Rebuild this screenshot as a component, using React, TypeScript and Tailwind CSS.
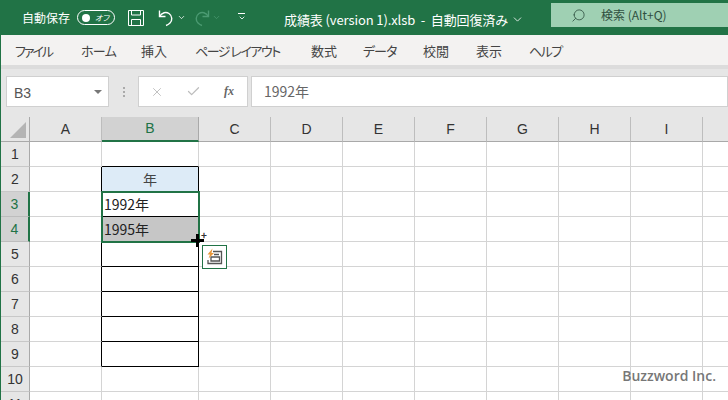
import React from 'react';
import { ChevronDown, Search, X, Check } from 'lucide-react';

const jp = "font-['Noto_Sans_CJK_JP','Noto_Sans',sans-serif] [font-feature-settings:'palt']";
const tabs = [
  ['ファイル', 'w-[66px] tracking-[-2px]'],
  ['ホーム', 'w-[60px] tracking-[-0.7px]'],
  ['挿入', 'w-[54px]'],
  ['ページ レイアウト', 'w-[116px] tracking-[-1.500px]'],
  ['数式', 'w-[52px]'],
  ['データ', 'w-[60px] tracking-[-1px]'],
  ['校閲', 'w-[53px]'],
  ['表示', 'w-[53px]'],
  ['ヘルプ', 'w-[60px] tracking-[-1.500px]'],
];
const cols = ['A', 'B', 'C', 'D', 'E', 'F', 'G', 'H', 'I', ''];
const rows = [1, 2, 3, 4, 5, 6, 7, 8, 9, 10, 11];

function SaveIcon() {
  return (
    <svg width="16" height="17" viewBox="0 0 16 17" fill="none" stroke="#fff" strokeWidth="1">
      <path d="M0.500 1.500h15v15h-15z" />
      <path d="M3.500 1.500v4.500h9v-4.500M3.500 16.500v-6h9v6" />
    </svg>
  );
}

function UndoIcon({ className }: { className: string }) {
  return (
    <svg className={className} width="16" height="18" viewBox="0 0 16 18" fill="none" stroke="currentColor" strokeWidth="1.400">
      <path d="M1.500 1.500v6h6" />
      <path d="M1.500 7.500C4 3.500 8 2.500 11 4.500c3.500 2.500 3.500 7 1 9.500-1 1-2.500 2-4 2.500" />
    </svg>
  );
}

function PasteIcon() {
  return (
    <svg width="18" height="18" viewBox="0 0 18 18" fill="none">
      <path d="M7 3.500h8.500V15.500H2V12" stroke="#555" strokeWidth="1.300" />
      <path d="M5 9h8.500v4H5zM8 6.500h5" stroke="#555" strokeWidth="1.300" />
      <path d="M6.500 0.500L1.500 6.500h2.500L2.500 10.500 8 5H5.500z" fill="#e8973a" />
    </svg>
  );
}

function cellClass(col: number, row: number) {
  const boxed = col === 1 && row >= 2 && row <= 9;
  let cls = 'border-r border-b ';
  cls += boxed ? 'border-black ' : 'border-[#d4d4d4] ';
  if (col === 0) cls += row >= 2 && row <= 9 ? 'border-r-black ' : '';
  if (col === 1 && row === 1) cls += 'border-b-black ';
  return cls;
}

export default function App() {
  return (
    <div className={`relative w-[728px] h-[400px] overflow-hidden flex flex-col bg-[#e6e6e6] border-l border-[#217346] ${jp}`}>
      {/* title bar */}
      <div className="h-[35px] shrink-0 bg-[#217346] text-white flex items-center -ml-px">
        <span className="ml-[22px] w-[49px] text-[12px] leading-none whitespace-nowrap">自動保存</span>
        <div className="ml-[6px] w-[38px] h-[15px] rounded-full border border-white flex items-center justify-between pl-[4px] pr-[5px]">
          <span className="w-[8px] h-[8px] rounded-full bg-white" />
          <span className="text-[8px] italic leading-none">オフ</span>
        </div>
        <div className="ml-[13px] flex"><SaveIcon /></div>
        <UndoIcon className="ml-[14px] text-white" />
        <ChevronDown className="ml-[3px]" size={9} strokeWidth={2} />
        <UndoIcon className="ml-[8px] text-[#4b9a72] -scale-x-100" />
        <ChevronDown className="ml-[2px] text-[#4b9a72]" size={9} strokeWidth={2} />
        <div className="ml-[16px] w-[9px] flex flex-col items-center gap-[1px]">
          <span className="w-[7px] h-px bg-white" />
          <ChevronDown size={8} strokeWidth={2.500} className="-mt-[1px]" />
        </div>
        <span className="ml-[38px] w-[225px] pt-[3px] text-[13px] tracking-[-0.1px] leading-none whitespace-pre">成績表 (version 1).xlsb  -  自動回復済み</span>
        <ChevronDown className="ml-[2px] mt-[3px]" size={13} strokeWidth={1.500} />
        <div className="ml-[27px] flex-1 h-[24px] -mt-[5px] bg-[#9fd0b3] text-[#2f4f40] flex items-center">
          <Search className="ml-[20px] -scale-x-100" size={15} strokeWidth={1.300} />
          <span className="ml-[15px] text-[12px] leading-none whitespace-nowrap">検索 (Alt+Q)</span>
        </div>
      </div>

      {/* ribbon tabs */}
      <div className="h-[34px] shrink-0 bg-[#f3f2f1] flex items-center pl-[14px] text-[13px] text-[#444] border-b-[4px] border-[#dcdcdc]">
        {tabs.map(([t, w]) => (
          <span key={t} className={`${w} whitespace-pre leading-none`}>{t}</span>
        ))}
      </div>

      {/* formula bar */}
      <div className="h-[48px] shrink-0 flex items-start pt-[7px] pl-[5px]">
        <div className="w-[103px] h-[31px] bg-white border border-[#d0d0d0] flex items-center justify-between pl-[7px] pr-[6px] text-[14px] text-[#555]">
          <span className="font-['Liberation_Sans',sans-serif] pt-[3px]">B3</span>
          <span className="w-0 h-0 border-x-[4px] border-x-transparent border-t-[4px] border-t-[#777]" />
        </div>
        <div className="w-[29px] h-[31px] flex flex-col items-center justify-center gap-[2px]">
          <span className="w-[2px] h-[2px] bg-[#aaa]" />
          <span className="w-[2px] h-[2px] bg-[#aaa]" />
          <span className="w-[2px] h-[2px] bg-[#aaa]" />
        </div>
        <div className="w-[110px] h-[31px] bg-white border border-[#d0d0d0] flex items-center text-[#bdbdbd]">
          <X className="ml-[11px]" size={14} strokeWidth={1.600} />
          <Check className="ml-[22px]" size={15} strokeWidth={2} />
          <span className="ml-[23px] -mt-[2px] text-[12px] italic font-bold text-[#666] font-['Liberation_Serif',serif] leading-none">fx</span>
        </div>
        <div className="ml-[3px] flex-1 h-[31px] bg-white border border-[#d0d0d0] flex items-center pl-[12px] text-[14px] text-[#666]">
          1992年
        </div>
      </div>

      {/* sheet */}
      <div className="relative flex-1 bg-white grid grid-cols-[29px_72px_97px_72px_72px_72px_72px_72px_72px_72px_72px] grid-rows-[25px_repeat(11,25px)] text-[14px]">
        <div className="bg-[#e6e6e6] border-r border-b border-[#a9a9a9] flex items-end justify-end pr-[3px] pb-[3px]">
          <span className="w-0 h-0 border-l-[16px] border-l-transparent border-b-[16px] border-b-[#b4b4b4]" />
        </div>
        {cols.map((c, i) => (
          <div
            key={i}
            className={
              i === 1
                ? 'bg-[#d2d2d2] border-b-2 border-[#217346] border-r border-r-[#a9a9a9] flex items-center justify-center text-[#217346]'
                : 'bg-[#e6e6e6] border-r border-b border-r-[#bdbdbd] border-b-[#a9a9a9] flex items-center justify-center text-[#333]'
            }
          >
            <span className="font-['Liberation_Sans',sans-serif] text-[14px]">{c}</span>
          </div>
        ))}
        {rows.map(r => (
          <React.Fragment key={r}>
            <div
              className={
                r === 3 || r === 4
                  ? 'bg-[#d2d2d2] border-r-2 border-[#217346] border-b border-b-[#bdbdbd] flex items-center justify-center text-[#217346]'
                  : 'bg-[#e6e6e6] border-r border-b border-r-[#a9a9a9] border-b-[#c8c8c8] flex items-center justify-center text-[#333]'
              }
            >
              <span className="font-['Liberation_Sans',sans-serif] text-[14px]">{r}</span>
            </div>
            {cols.map((_, i) => {
              let content: React.ReactNode = null;
              let extra = '';
              if (i === 1 && r === 2) {
                extra = 'bg-[#ddebf7] flex items-center justify-center text-[#444]';
                content = '年';
              }
              if (i === 1 && r === 3) {
                extra = 'flex items-center pl-[2px] text-[#222]';
                content = '1992年';
              }
              if (i === 1 && r === 4) {
                extra = 'bg-[#c6c6c6] flex items-center pl-[2px] text-[#222]';
                content = '1995年';
              }
              return (
                <div key={i} className={`${cellClass(i, r)} ${extra}`}>
                  {content}
                </div>
              );
            })}
          </React.Fragment>
        ))}

        {/* selection + fill cursor */}
        <div className="absolute left-[100px] top-[74px] w-[99px] h-[52px] border-2 border-[#217346] pointer-events-none" />
        <div className="absolute left-[190px] top-[117px] w-[13px] h-[13px]">
          <span className="absolute left-[5px] top-0 w-[3px] h-[13px] bg-black" />
          <span className="absolute left-0 top-[5px] w-[13px] h-[3px] bg-black" />
        </div>
        <span className="absolute left-[200px] top-[113px] text-[10px] font-bold leading-none text-[#333]">+</span>
        <div className="absolute left-[201px] top-[128px] w-[25px] h-[24px] bg-white border border-[#217346] flex items-center justify-center">
          <PasteIcon />
        </div>
      </div>

      <span className="absolute right-[12px] bottom-[17px] text-[14px] leading-none text-[#777] font-['Open_Sans',sans-serif] font-semibold">Buzzword Inc.</span>
    </div>
  );
}
